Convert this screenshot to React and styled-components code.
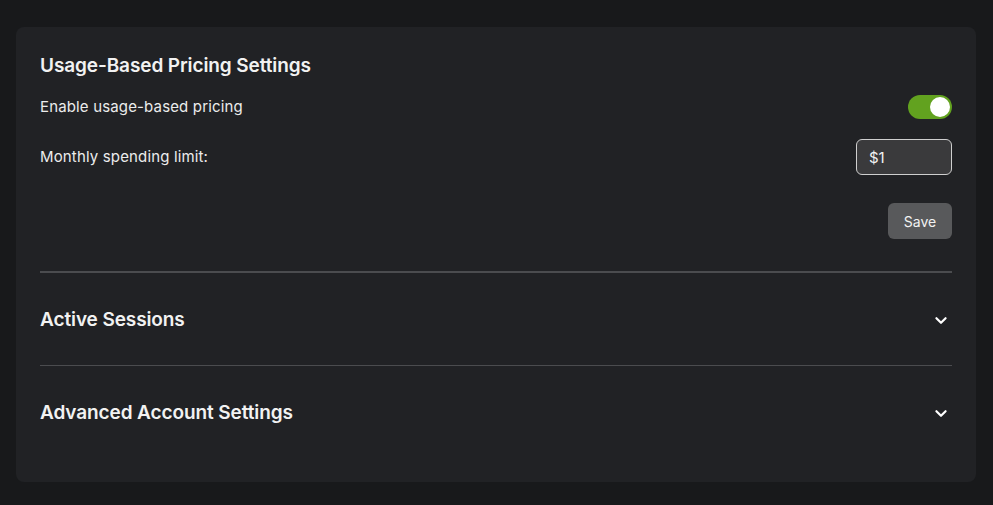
import React, { useState } from 'react';
import styled, { createGlobalStyle } from 'styled-components';

const GlobalStyle = createGlobalStyle`
  body {
    margin: 0;
    background: #18191b;
    font-family: Inter, "Noto Sans", sans-serif;
    color: #f2f2f2;
  }
`;

const Page = styled.div`
  padding: 27px 17px 23px 16px;
`;

const Card = styled.div`
  background: #212225;
  border-radius: 8px;
  padding: 27px 24px 24px;
  min-height: 404px;
`;

const Title = styled.h2`
  margin: 0;
  font-size: 19px;
  font-weight: 600;
  line-height: 24px;
  letter-spacing: -0.1px;
`;

const Row = styled.div`
  display: flex;
  align-items: center;
  justify-content: space-between;
  margin-top: ${(p) => p.$top}px;
`;

const Label = styled.span`
  font-size: 15px;
  line-height: 20px;
  letter-spacing: 0.15px;
  color: #ececec;
`;

const Toggle = styled.button`
  width: 44px;
  height: 24px;
  border: none;
  border-radius: 12px;
  padding: 2px;
  background: ${(p) => (p.$on ? '#62a21f' : '#4a4b4e')};
  display: flex;
  justify-content: ${(p) => (p.$on ? 'flex-end' : 'flex-start')};
  cursor: pointer;
`;

const Knob = styled.span`
  width: 20px;
  height: 20px;
  border-radius: 50%;
  background: #fff;
`;

const Input = styled.input`
  width: 96px;
  height: 36px;
  box-sizing: border-box;
  border: 1px solid #cfcfcf;
  border-radius: 6px;
  background: #3a3a3c;
  color: #f2f2f2;
  font-family: inherit;
  font-size: 15px;
  padding: 0 12px;
  outline: none;
`;

const Actions = styled.div`
  display: flex;
  justify-content: flex-end;
  margin-top: 28px;
`;

const SaveButton = styled.button`
  width: 64px;
  height: 36px;
  border: none;
  border-radius: 6px;
  background: #58595b;
  color: #f2f2f2;
  font-family: inherit;
  font-size: 14px;
  cursor: pointer;
`;

const Divider = styled.hr`
  margin: ${(p) => p.$top || 0}px 0 0;
  border: none;
  height: ${(p) => p.$h}px;
  background: #4b4c4f;
`;

const Section = styled.div`
  display: flex;
  align-items: center;
  justify-content: space-between;
  height: ${(p) => p.$h}px;
  padding-top: 2px;
  box-sizing: border-box;
  cursor: pointer;
`;

const Chevron = () => (
  <svg width="22" height="22" viewBox="0 0 24 24" fill="none" stroke="#fff" strokeWidth="2.4" strokeLinecap="round" strokeLinejoin="round">
    <path d="M7 10l5 5 5-5" />
  </svg>
);

export default function App() {
  const [on, setOn] = useState(true);
  return (
    <Page>
      <GlobalStyle />
      <Card>
        <Title>Usage-Based Pricing Settings</Title>
        <Row $top={17}>
          <Label>Enable usage-based pricing</Label>
          <Toggle $on={on} onClick={() => setOn(!on)}>
            <Knob />
          </Toggle>
        </Row>
        <Row $top={20}>
          <Label>Monthly spending limit:</Label>
          <Input defaultValue="$1" />
        </Row>
        <Actions>
          <SaveButton>Save</SaveButton>
        </Actions>
        <Divider $h={2} $top={32} />
        <Section $h={92}>
          <Title>Active Sessions</Title>
          <Chevron />
        </Section>
        <Divider $h={1} />
        <Section $h={92}>
          <Title>Advanced Account Settings</Title>
          <Chevron />
        </Section>
      </Card>
    </Page>
  );
}
